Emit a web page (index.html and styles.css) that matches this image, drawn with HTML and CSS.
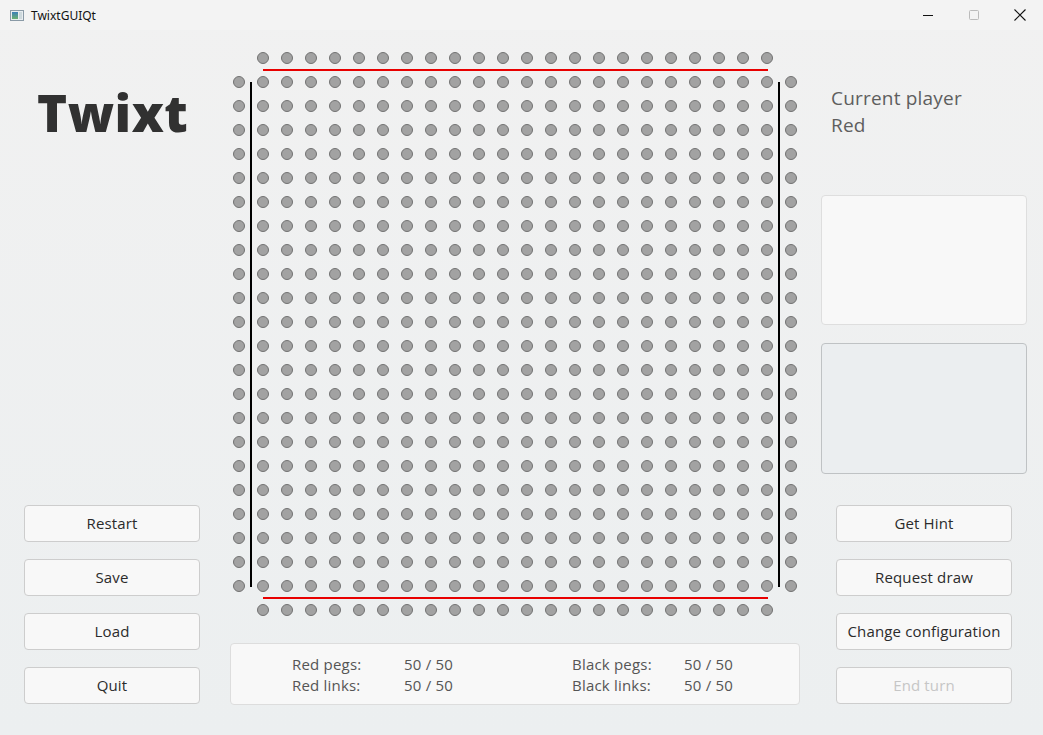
FILE: index.html
```html
<!DOCTYPE html>
<html>
<head>
<meta charset="utf-8">
<title>TwixtGUIQt</title>
<link rel="stylesheet" href="styles.css">
</head>
<body>
<div class="window">
  <div class="titlebar">
    <div class="app-icon"><div class="icon-left"></div><div class="icon-right"></div></div>
    <div class="app-title">TwixtGUIQt</div>
    <div class="controls">
      <div class="ctl"><svg width="12" height="12" viewBox="0 0 12 12"><path d="M1 6.5h10" stroke="#111" stroke-width="1"/></svg></div>
      <div class="ctl"><svg width="12" height="12" viewBox="0 0 12 12"><rect x="1.5" y="1.5" width="9" height="9" rx="1" fill="none" stroke="#bbb" stroke-width="1"/></svg></div>
      <div class="ctl"><svg width="12" height="12" viewBox="0 0 12 12"><path d="M0.5 0.5L11.5 11.5M11.5 0.5L0.5 11.5" stroke="#111" stroke-width="1.1"/></svg></div>
    </div>
  </div>
  <div class="main">
    <div class="left">
      <h1 class="logo">Twixt</h1>
      <div class="btns">
        <button class="btn">Restart</button>
        <button class="btn">Save</button>
        <button class="btn">Load</button>
        <button class="btn">Quit</button>
      </div>
    </div>
    <div class="center">
      <div class="board" id="board">
        <div class="line red top"></div>
        <div class="line red bottom"></div>
        <div class="line black lft"></div>
        <div class="line black rgt"></div>
      </div>
      <div class="stats">
        <div class="stat-grid">
          <span>Red pegs:</span><span>50 / 50</span>
          <span>Red links:</span><span>50 / 50</span>
        </div>
        <div class="stat-grid">
          <span>Black pegs:</span><span>50 / 50</span>
          <span>Black links:</span><span>50 / 50</span>
        </div>
      </div>
    </div>
    <div class="right">
      <div class="player">
        <div>Current player</div>
        <div>Red</div>
      </div>
      <div class="box box-light"></div>
      <div class="box box-dark"></div>
      <div class="btns rbtns">
        <button class="btn">Get Hint</button>
        <button class="btn">Request draw</button>
        <button class="btn">Change configuration</button>
        <button class="btn disabled">End turn</button>
      </div>
    </div>
  </div>
</div>
<script src="app.js"></script>
</body>
</html>
```
FILE: styles.css
```css
* { box-sizing: border-box; }
html, body { margin: 0; padding: 0; }
body {
  width: 1043px;
  height: 735px;
  overflow: hidden;
  font-family: "Open Sans", "Noto Sans", sans-serif;
  background: #f0f0f0;
}
.window {
  width: 1043px;
  height: 735px;
  display: flex;
  flex-direction: column;
  background: linear-gradient(#f1f1f1, #eceff0);
}
.titlebar {
  height: 30px;
  flex: none;
  display: flex;
  align-items: center;
  background: #f3f3f3;
  font-family: "Noto Sans", "Liberation Sans", sans-serif;
  font-size: 12px;
  color: #111;
}
.app-icon {
  width: 14px;
  height: 11px;
  margin-left: 10px;
  border: 1px solid #8a9aa6;
  background: #e8edf0;
  display: flex;
  padding: 1px;
  gap: 1px;
}
.icon-left { width: 6px; background: linear-gradient(#3b7fb8, #6bb06f); }
.icon-right { flex: 1; background: #cdd8dc; }
.app-title { margin-left: 7px; }
.controls { margin-left: auto; display: flex; }
.ctl {
  width: 46px;
  height: 30px;
  display: flex;
  align-items: center;
  justify-content: center;
}
.main {
  flex: 1;
  display: flex;
}
.left {
  width: 227px;
  flex: none;
  display: flex;
  flex-direction: column;
  padding-left: 24px;
}
.logo {
  margin: 47px 0 0 13px;
  font-size: 51px;
  font-weight: 800;
  line-height: 70px;
  color: #313131;
  letter-spacing: 0.5px;
}
.btns {
  margin-top: auto;
  margin-bottom: 31px;
  display: flex;
  flex-direction: column;
  gap: 17px;
}
.btn {
  width: 176px;
  height: 37px;
  background: #f8f8f8;
  border: 1px solid #cdcdcd;
  border-radius: 4px;
  font-family: "Open Sans", "Noto Sans", sans-serif;
  font-size: 15px;
  letter-spacing: 0.15px;
  color: #2b2b2b;
  padding: 0 0 2px 0;
}
.btn.disabled { color: #c6c6c6; }
.center {
  width: 576px;
  flex: none;
  display: flex;
  flex-direction: column;
}
.board {
  position: relative;
  margin-top: 16px;
  width: 576px;
  height: 576px;
  display: grid;
  grid-template-columns: repeat(24, 24px);
  grid-template-rows: repeat(24, 24px);
}
.cell {
  display: flex;
  align-items: center;
  justify-content: center;
}
.dot {
  width: 12px;
  height: 12px;
  border-radius: 50%;
  background: #a2a2a2;
  border: 1px solid #727272;
}
.line { position: absolute; }
.red { background: #e80000; height: 2px; left: 36px; width: 505px; }
.red.top { top: 23px; }
.red.bottom { top: 551px; }
.black { background: #000; width: 2px; top: 36px; height: 505px; }
.black.lft { left: 23px; }
.black.rgt { left: 551px; }
.stats {
  margin: 21px 0 0 3px;
  width: 570px;
  height: 62px;
  background: #f8f8f8;
  border: 1px solid #dddddd;
  border-radius: 4px;
  display: flex;
  align-items: flex-start;
  padding: 10px 0 0 61px;
  gap: 119px;
  font-size: 15px;
  letter-spacing: 0.2px;
  color: #555;
}
.stat-grid {
  display: grid;
  grid-template-columns: 112px auto;
  line-height: 21px;
}
.right {
  flex: 1;
  display: flex;
  flex-direction: column;
  padding-left: 18px;
}
.player {
  margin: 55px 0 0 10px;
  font-size: 19px;
  letter-spacing: 0.2px;
  line-height: 27px;
  color: #5e5e5e;
}
.box {
  width: 206px;
  border-radius: 4px;
}
.box-light {
  margin-top: 56px;
  height: 130px;
  background: #f8f8f8;
  border: 1px solid #dedede;
}
.box-dark {
  margin-top: 18px;
  height: 131px;
  background: #ebeef0;
  border: 1px solid #bfc2c4;
}
.rbtns { margin-left: 15px; }
```
FILE: app.js
```js
(function () {
  var board = document.getElementById('board');
  var frag = document.createDocumentFragment();
  for (var r = 0; r < 24; r++) {
    for (var c = 0; c < 24; c++) {
      var cell = document.createElement('div');
      cell.className = 'cell';
      var corner = (r === 0 || r === 23) && (c === 0 || c === 23);
      if (!corner) {
        var d = document.createElement('div');
        d.className = 'dot';
        cell.appendChild(d);
      }
      frag.appendChild(cell);
    }
  }
  board.insertBefore(frag, board.firstChild);
})();
```
